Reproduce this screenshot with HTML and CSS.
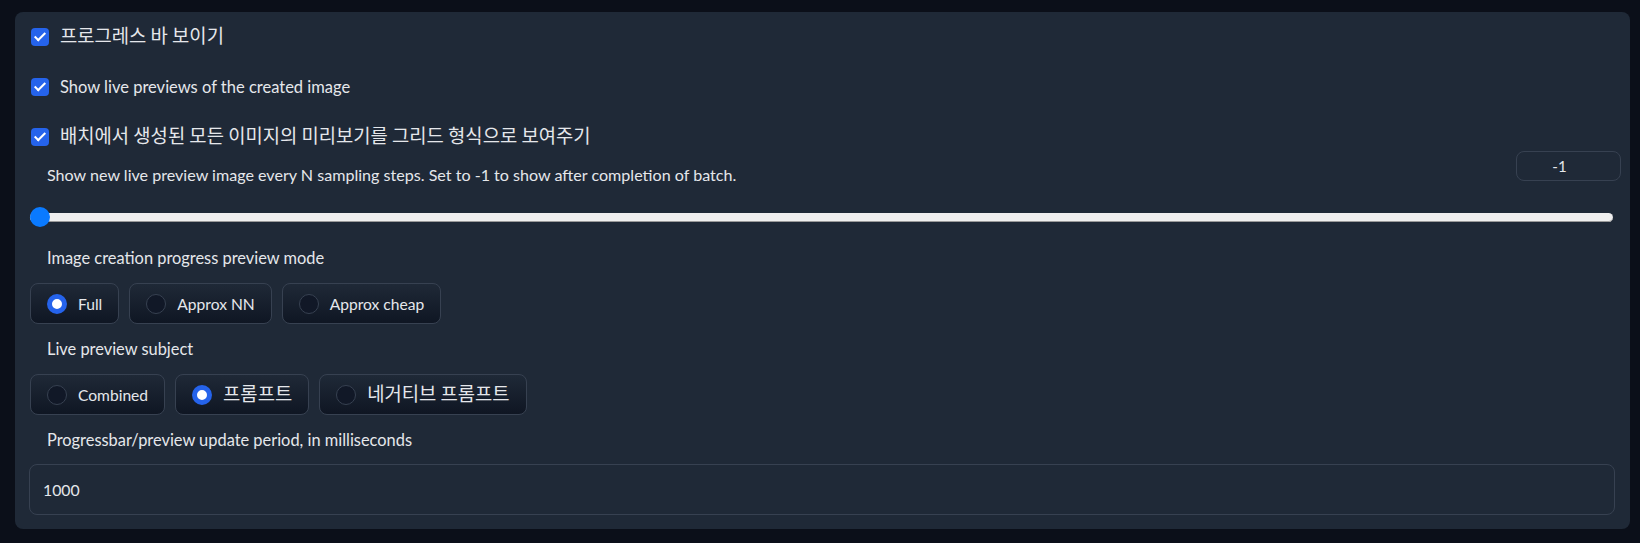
FILE: index.html
```html
<!DOCTYPE html>
<html>
<head>
	<title>Live previews</title>
	<meta charset="utf-8">
<link rel="stylesheet" href="styles.css">
</head>
<body>
	<main class="panel">
		<label class="check">
			<input type="checkbox" checked>
			<span class="box"></span>
			<span class="ko">프로그레스 바 보이기</span>
		</label>
		<label class="check">
			<input type="checkbox" checked>
			<span class="box"></span>
			<span>Show live previews of the created image</span>
		</label>
		<label class="check">
			<input type="checkbox" checked>
			<span class="box"></span>
			<span class="ko">배치에서 생성된 모든 이미지의 미리보기를 그리드 형식으로 보여주기</span>
		</label>

		<div class="slider">
			<div class="slider-head">
				<span class="label">Show new live preview image every N sampling steps. Set to -1 to show after completion of batch.</span>
				<input class="num" type="text" value="-1">
			</div>
			<input class="range" type="range" min="-1" max="32" value="-1">
		</div>

		<span class="label gap">Image creation progress preview mode</span>
		<div class="radios">
			<label class="radio"><input type="radio" name="mode" checked><span class="dot"></span><span>Full</span></label>
			<label class="radio"><input type="radio" name="mode"><span class="dot"></span><span>Approx NN</span></label>
			<label class="radio"><input type="radio" name="mode"><span class="dot"></span><span>Approx cheap</span></label>
		</div>

		<span class="label gap">Live preview subject</span>
		<div class="radios">
			<label class="radio"><input type="radio" name="subject"><span class="dot"></span><span>Combined</span></label>
			<label class="radio"><input type="radio" name="subject" checked><span class="dot"></span><span class="ko-sm">프롬프트</span></label>
			<label class="radio"><input type="radio" name="subject"><span class="dot"></span><span class="ko-sm">네거티브 프롬프트</span></label>
		</div>

		<span class="label gap">Progressbar/preview update period, in milliseconds</span>
		<input class="text" type="text" value="1000">
	</main>
</body>
</html>
```

FILE: styles.css
```css
body {
	margin: 0;
	background: #0b0f19;
	color: #e5e7eb;
	font-family: Lato, "Noto Sans CJK KR", sans-serif;
	font-size: 15.6px;
}
.panel {
	display: flex;
	flex-direction: column;
	margin: 12px 10px 14px 15px;
	padding: 12px 15px 14px 14px;
	background: #1f2937;
	border-radius: 8px;
}

/* checkboxes */
.check {
	display: flex;
	align-items: center;
	height: 26px;
	margin-bottom: 24px;
	padding-left: 2px;
	font-size: 16.5px;
	cursor: pointer;
}
.check:nth-of-type(3) {
	margin-bottom: 1px;
}
.check input,
.radio input {
	display: none;
}
.box {
	flex: none;
	width: 18px;
	height: 18px;
	margin-right: 11px;
	border-radius: 4px;
	background: #2563eb;
	position: relative;
}
.box::after {
	content: "";
	position: absolute;
	left: 6px;
	top: 2px;
	width: 4px;
	height: 9px;
	border: solid #fff;
	border-width: 0 2.5px 2.5px 0;
	transform: rotate(45deg);
}
.ko,
.ko-sm {
	font-family: "Noto Sans CJK KR", sans-serif;
	font-size: 18.8px;
	line-height: 24px;
	margin-top: -5px;
}
.ko-sm {
	margin-top: -4px;
}

/* slider */
.slider {
	display: flex;
	flex-direction: column;
	margin-right: -6px;
}
.slider-head {
	display: flex;
	justify-content: space-between;
	height: 30px;
}
.label {
	padding-left: 18px;
	font-size: 16.4px;
	line-height: 20px;
}
.slider-head .label {
	margin-top: 14px;
	font-size: 16.1px;
}
.num {
	width: 105px;
	height: 30px;
	box-sizing: border-box;
	padding: 0 18px 0 0;
	border: 1px solid #374151;
	border-radius: 8px;
	background: transparent;
	color: #e5e7eb;
	font: inherit;
	font-size: 15px;
	text-align: center;
}
.range {
	-webkit-appearance: none;
	appearance: none;
	margin: 26px 8px 0 1px;
	height: 20px;
	background: transparent;
}
.range::-webkit-slider-runnable-track {
	height: 9px;
	background: #efefef;
	border-radius: 5px;
	box-shadow: inset 0 -1px 0 #9a9a9a;
}
.range::-webkit-slider-thumb {
	-webkit-appearance: none;
	width: 20px;
	height: 20px;
	margin-top: -5.5px;
	border-radius: 50%;
	background: #0a7aff;
}

/* radios */
.gap {
	margin-top: 21px;
}
.radios {
	display: flex;
	gap: 10px;
	margin: 15px 0 0 1px;
}
.radios + .gap {
	margin-top: 15px;
}
.radio {
	display: flex;
	align-items: center;
	height: 41px;
	box-sizing: border-box;
	padding: 0 16px;
	border: 1px solid #374151;
	border-radius: 8px;
	background: linear-gradient(to bottom, #1f2937, #0f1623);
	cursor: pointer;
}
.dot {
	width: 20px;
	height: 20px;
	box-sizing: border-box;
	margin-right: 11px;
	border: 1px solid #374151;
	border-radius: 50%;
	background: #111827;
}
.radio input:checked + .dot {
	border: 5.5px solid #2563eb;
	background: #fff;
}

/* text field */
.text {
	margin-top: 14px;
	height: 51px;
	box-sizing: border-box;
	padding: 0 13px;
	border: 1px solid #374151;
	border-radius: 8px;
	background: transparent;
	color: #e5e7eb;
	font: inherit;
	font-size: 15.8px;
}
```
